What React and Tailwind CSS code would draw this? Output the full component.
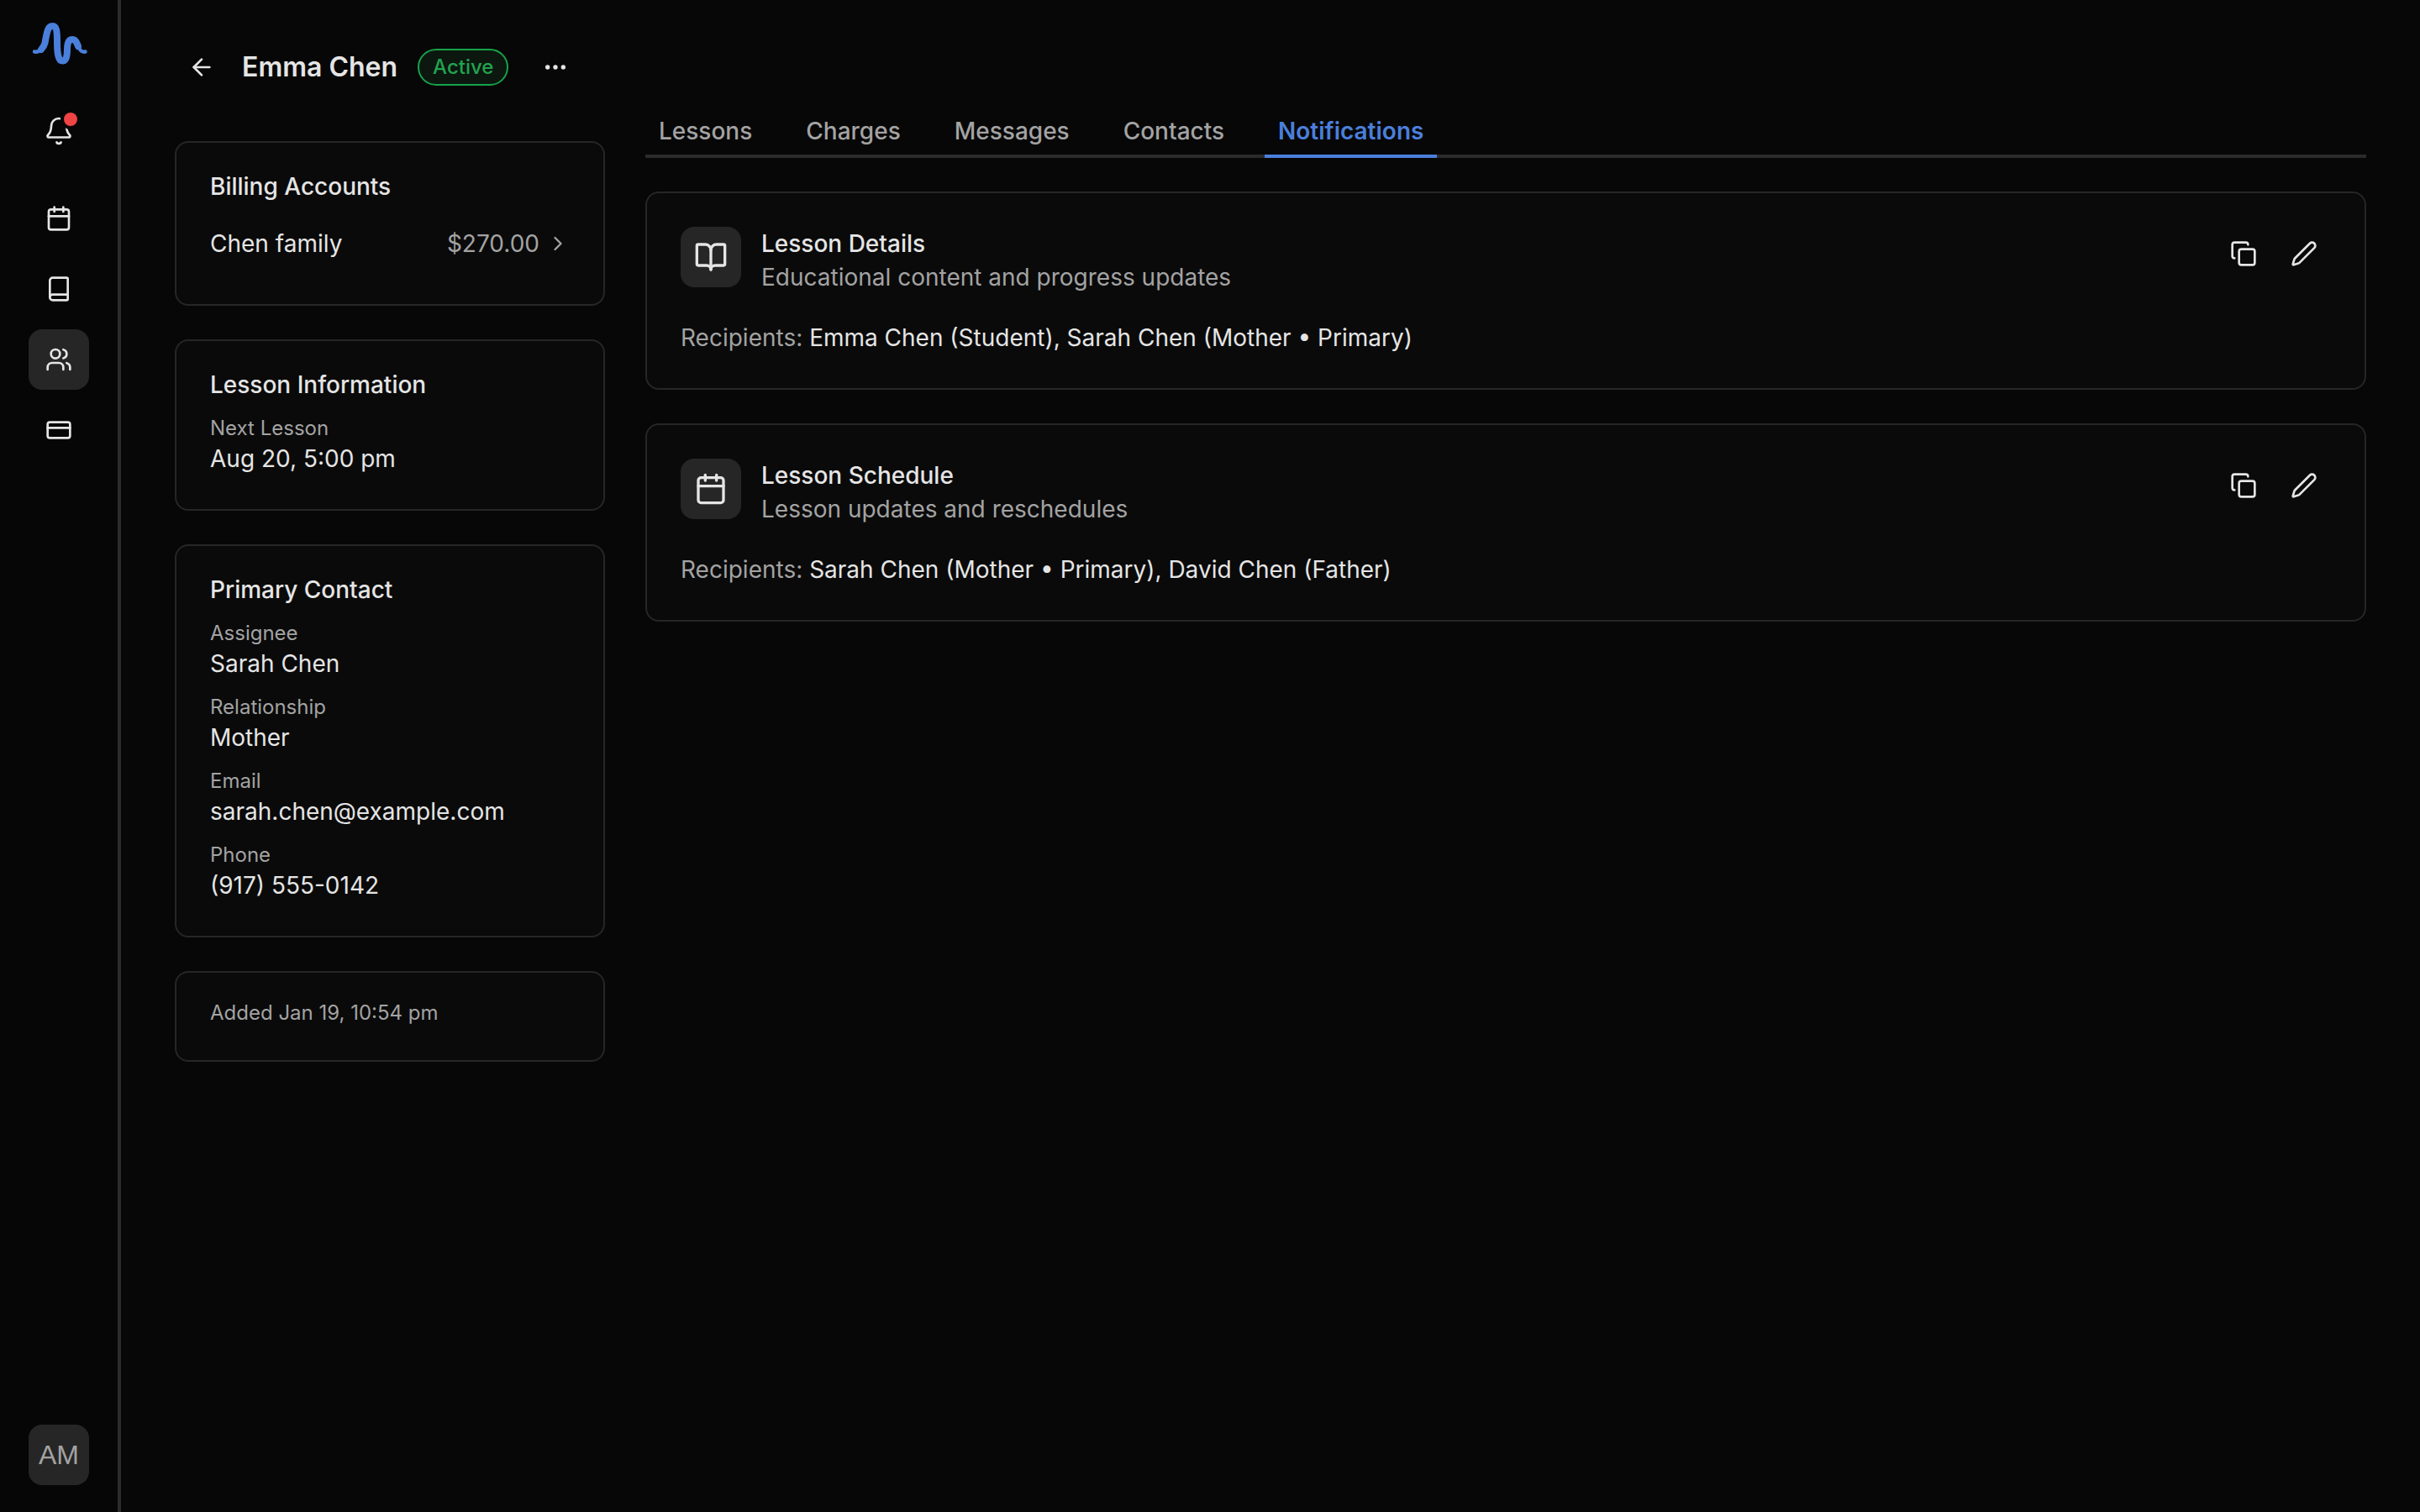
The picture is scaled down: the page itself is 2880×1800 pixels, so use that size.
import React from 'react'
import { ArrowLeft, Bell, BookOpen, Book, Calendar, ChevronRight, Copy, CreditCard, Ellipsis, Pen, Users } from 'lucide-react'

const tabs = ['Lessons', 'Charges', 'Messages', 'Contacts', 'Notifications']

const contact = [
  ['Assignee', 'Sarah Chen'],
  ['Relationship', 'Mother'],
  ['Email', 'sarah.chen@example.com'],
  ['Phone', '(917) 555-0142'],
]

const notifications = [
  {
    icon: BookOpen,
    title: 'Lesson Details',
    sub: 'Educational content and progress updates',
    recipients: 'Emma Chen (Student), Sarah Chen (Mother • Primary)',
  },
  {
    icon: Calendar,
    title: 'Lesson Schedule',
    sub: 'Lesson updates and reschedules',
    recipients: 'Sarah Chen (Mother • Primary), David Chen (Father)',
  },
]

const Logo = () => (
  <svg width="72" height="72" viewBox="-2 0 72 72" fill="none" strokeLinecap="round" stroke="#4a7fdc">
    <path d="M13 43C15 41 16.5 39 17.5 35C20 21 21 15 26.5 15C31.5 15 32 21 32 34C32 50 34 56.5 38.5 56.5C43 56.5 44 50 44 43C44 34 46 31 50 31C54 31 55.5 35 57 39" strokeWidth="8" />
    <path d="M57 39C59 44 61 46.5 65.5 45.5" strokeWidth="4.5" />
    <path d="M5 45.5C8.5 46.2 11 45 13 43" strokeWidth="4.5" />
  </svg>
)

const SideButton = ({ icon: Icon, size = 32, stroke = 2, active, dot }) => (
  <button className={`relative flex h-[72px] w-[72px] items-center justify-center rounded-[16px] text-[#e5e5e5] ${active ? 'bg-[#262626]' : ''}`}>
    <Icon size={size} strokeWidth={stroke} />
    {dot && <span className="absolute right-[14px] top-[14px] h-4 w-4 rounded-full bg-[#ef4444] ring-4 ring-[#060606]" />}
  </button>
)

const Card = ({ children }) => (
  <div className="rounded-[16px] border-2 border-[#262626] bg-[#0a0a0a] px-10 pt-8 pb-10">{children}</div>
)

const CardTitle = ({ children }) => (
  <h3 className="text-[28px] leading-10 font-medium text-[#e5e5e5]">{children}</h3>
)

const Field = ({ label, value }) => (
  <div>
    <p className="text-[24px] leading-8 text-[#a3a3a3]">{label}</p>
    <p className="text-[28px] leading-10 text-[#e5e5e5]">{value}</p>
  </div>
)

export default function App() {
  return (
    <div className="flex h-[1800px] w-full bg-[#070707] font-['Inter',sans-serif] overflow-hidden">
      {/* sidebar */}
      <aside className="flex w-[144px] shrink-0 flex-col items-center border-r-4 border-[#2b2b2b] bg-[#060606] pt-4 pb-8">
        <Logo />
        <div className="mt-8">
          <SideButton icon={Bell} size={36} stroke={1.78} dot />
        </div>
        <nav className="mt-8 flex flex-col gap-3">
          <SideButton icon={Calendar} />
          <SideButton icon={Book} />
          <SideButton icon={Users} active />
          <SideButton icon={CreditCard} />
        </nav>
        <div className="mt-auto flex h-[72px] w-[72px] items-center justify-center rounded-[16px] bg-[#262626] font-['Liberation_Sans',sans-serif] text-[32px] text-[#a3a3a3]">
          AM
        </div>
      </aside>

      <main className="flex flex-1 gap-12 px-16">
        {/* left column */}
        <div className="w-[512px] shrink-0 pt-10">
          <div className="mb-12 flex h-20 items-center pl-4">
            <ArrowLeft size={32} className="text-[#e5e5e5]" />
            <h1 className="ml-8 text-[32px] font-semibold text-[#e5e5e5]">Emma Chen</h1>
            <span className="ml-6 rounded-full border-2 border-[#16a34a] bg-[#0c1710] px-4 text-[24px] leading-10 font-medium text-[#22a34f]">
              Active
            </span>
            <Ellipsis size={32} className="ml-10 text-[#e5e5e5]" />
          </div>

          <div className="flex flex-col gap-10">
            <Card>
              <CardTitle>Billing Accounts</CardTitle>
              <div className="mt-4 flex items-center justify-between py-3 text-[28px] leading-10">
                <span className="text-[#e5e5e5]">Chen family</span>
                <span className="flex items-center gap-2 text-[#a3a3a3]">
                  $270.00
                  <ChevronRight size={28} />
                </span>
              </div>
            </Card>

            <Card>
              <CardTitle>Lesson Information</CardTitle>
              <div className="mt-4">
                <Field label="Next Lesson" value="Aug 20, 5:00 pm" />
              </div>
            </Card>

            <Card>
              <CardTitle>Primary Contact</CardTitle>
              <div className="mt-4 flex flex-col gap-4">
                {contact.map(([label, value]) => (
                  <Field key={label} label={label} value={value} />
                ))}
              </div>
            </Card>

            <Card>
              <p className="text-[24px] leading-8 text-[#a3a3a3]">Added Jan 19, 10:54 pm</p>
            </Card>
          </div>
        </div>

        {/* right column */}
        <div className="min-w-0 flex-1 pt-[136px]">
          <div className="flex gap-8 border-b-4 border-[#2b2b2b]">
            {tabs.map((tab) => (
              <button
                key={tab}
                className={`-mb-1 border-b-4 px-4 pb-2 text-[28px] leading-10 ${
                  tab === 'Notifications' ? 'border-[#4a7fdc] font-semibold text-[#4a7fdc]' : 'border-transparent font-medium text-[#a3a3a3]'
                }`}
              >
                {tab}
              </button>
            ))}
          </div>

          <div className="mt-10 flex flex-col gap-10">
            {notifications.map((item) => (
              <div key={item.title} className="rounded-[16px] border-2 border-[#262626] bg-[#0a0a0a] p-10">
                <div className="flex items-start">
                  <div className="flex h-[72px] w-[72px] shrink-0 items-center justify-center rounded-[16px] bg-[#262626] text-[#e5e5e5]">
                    <item.icon size={40} />
                  </div>
                  <div className="ml-6 flex-1">
                    <p className="text-[28px] leading-10 font-medium text-[#e5e5e5]">{item.title}</p>
                    <p className="text-[28px] leading-10 text-[#a3a3a3]">{item.sub}</p>
                  </div>
                  <div className="flex gap-2 text-[#e5e5e5]">
                    <button className="flex h-16 w-16 items-center justify-center"><Copy size={32} /></button>
                    <button className="flex h-16 w-16 items-center justify-center"><Pen size={32} /></button>
                  </div>
                </div>
                <p className="mt-8 text-[28px] leading-10 text-[#e5e5e5]">
                  <span className="text-[#a3a3a3]">Recipients:</span> {item.recipients}
                </p>
              </div>
            ))}
          </div>
        </div>
      </main>
    </div>
  )
}
